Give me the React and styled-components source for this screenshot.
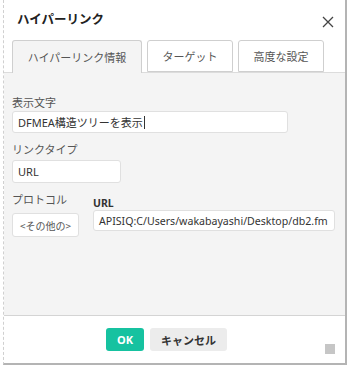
import React from 'react';
import styled, { createGlobalStyle } from 'styled-components';

const Global = createGlobalStyle`
  html, body {
    margin: 0;
    background: #ffffff;
    font-family: "Noto Sans", "Noto Sans CJK JP", sans-serif;
  }
`;

const Dialog = styled.div`
  position: relative;
  box-sizing: border-box;
  margin-left: 3px;
  width: 344px;
  height: 365px;
  border-left: 1px dashed #d0d0d0;
  border-right: 2px solid #b4b4b4;
  border-bottom: 2px solid #b4b4b4;
  display: flex;
  flex-direction: column;
  background: #ffffff;
`;

const Header = styled.div`
  height: 40px;
  display: flex;
  align-items: center;
  justify-content: space-between;
  padding: 0 10px 0 13px;
  box-sizing: border-box;
`;

const Title = styled.div`
  font-family: "Noto Sans CJK JP", sans-serif;
  font-size: 12.5px;
  font-weight: 700;
  color: #222;
  margin-top: -3px;
`;

const Close = styled.div`
  width: 14px;
  height: 14px;
  margin-top: 4px;
  display: flex;
`;

const Tabs = styled.div`
  display: flex;
  gap: 5px;
  padding-left: 8px;
  height: 32px;
`;

const Tab = styled.div`
  box-sizing: border-box;
  width: ${(p) => p.w}px;
  height: ${(p) => (p.active ? 33 : 32)}px;
  border: 1px solid #cfcfcf;
  border-bottom: ${(p) => (p.active ? 'none' : '1px solid #cfcfcf')};
  border-radius: 3px 3px 0 0;
  background: ${(p) => (p.active ? '#f4f4f4' : '#ffffff')};
  display: flex;
  align-items: center;
  justify-content: center;
  font-family: "Noto Sans CJK JP", sans-serif;
  font-size: 11px;
  color: #555;
  position: relative;
  z-index: 1;
`;

const Panel = styled.div`
  box-sizing: border-box;
  height: 244px;
  background: #f4f4f4;
  border-top: 1px solid #dcdcdc;
  border-bottom: 1px solid #d4d4d4;
  padding: 21px 0 0 8px;
  display: flex;
  flex-direction: column;
`;

const Label = styled.div`
  font-family: "Noto Sans CJK JP", sans-serif;
  font-size: 11px;
  color: #555;
  line-height: 16px;
  margin-bottom: ${(p) => p.mb || 1}px;
`;

const Field = styled.div`
  box-sizing: border-box;
  width: ${(p) => p.w}px;
  height: ${(p) => p.h || 22}px;
  background: #fff;
  border: 1px solid #e0e0e0;
  border-radius: 3px;
  display: flex;
  align-items: center;
  padding-left: 5px;
  font-size: ${(p) => p.fs || 11}px;
  color: #333;
  white-space: nowrap;
  overflow: hidden;
  margin-bottom: ${(p) => p.mb || 0}px;
`;

const Caret = styled.span`
  display: inline-block;
  width: 1px;
  height: 13px;
  background: #333;
  margin-left: 1px;
`;

const Row = styled.div`
  display: flex;
  gap: 14px;
`;

const Col = styled.div`
  display: flex;
  flex-direction: column;
`;

const UrlLabel = styled.div`
  font-size: 10.5px;
  font-weight: 700;
  color: #333;
  line-height: 14px;
  margin-top: 5px;
`;

const Select = styled.div`
  box-sizing: border-box;
  width: 67px;
  height: 24px;
  background: #fff;
  border: 1px solid #e0e0e0;
  border-radius: 3px;
  display: flex;
  align-items: flex-end;
  justify-content: center;
  padding-bottom: 3px;
  font-family: "Noto Sans CJK JP", sans-serif;
  font-size: 10px;
  color: #555;
  white-space: nowrap;
`;

const Footer = styled.div`
  flex: 1;
  display: flex;
  align-items: flex-start;
  padding: 12px 0 0 102px;
  gap: 6px;
`;

const Button = styled.button`
  box-sizing: border-box;
  height: 23px;
  padding: 0;
  border: none;
  border-radius: 3px;
  background: ${(p) => (p.primary ? '#16c2a0' : '#ececec')};
  color: ${(p) => (p.primary ? '#fff' : '#333')};
  font-family: "Noto Sans", "Noto Sans CJK JP", sans-serif;
  font-size: 11px;
  font-weight: 700;
  white-space: nowrap;
  width: ${(p) => p.w}px;
`;

const Grip = styled.div`
  position: absolute;
  right: 10px;
  bottom: 9px;
  width: 10px;
  height: 10px;
  background: #c6c6c6;
`;

export default function App() {
  return (
    <>
      <Global />
      <Dialog>
        <Header>
          <Title>ハイパーリンク</Title>
          <Close>
            <svg width="14" height="14" viewBox="0 0 14 14">
              <path d="M2 2 L12 12 M12 2 L2 12" stroke="#444" strokeWidth="1.3" />
            </svg>
          </Close>
        </Header>
        <Tabs>
          <Tab w={130} active>ハイパーリンク情報</Tab>
          <Tab w={86}>ターゲット</Tab>
          <Tab w={86}>高度な設定</Tab>
        </Tabs>
        <Panel>
          <Label>表示文字</Label>
          <Field w={276} mb={8}>
            DFMEA構造ツリーを表示<Caret />
          </Field>
          <Label mb={3}>リンクタイプ</Label>
          <Field w={109} h={23} mb={8}>URL</Field>
          <Row>
            <Col>
              <Label mb={6}>プロトコル</Label>
              <Select>&lt;その他の&gt;</Select>
            </Col>
            <Col>
              <UrlLabel>URL</UrlLabel>
              <Field w={242} h={21} fs={10.6}>APISIQ:C/Users/wakabayashi/Desktop/db2.fm</Field>
            </Col>
          </Row>
        </Panel>
        <Footer>
          <Button primary w={38}>OK</Button>
          <Button w={77}>キャンセル</Button>
        </Footer>
        <Grip />
      </Dialog>
    </>
  );
}
